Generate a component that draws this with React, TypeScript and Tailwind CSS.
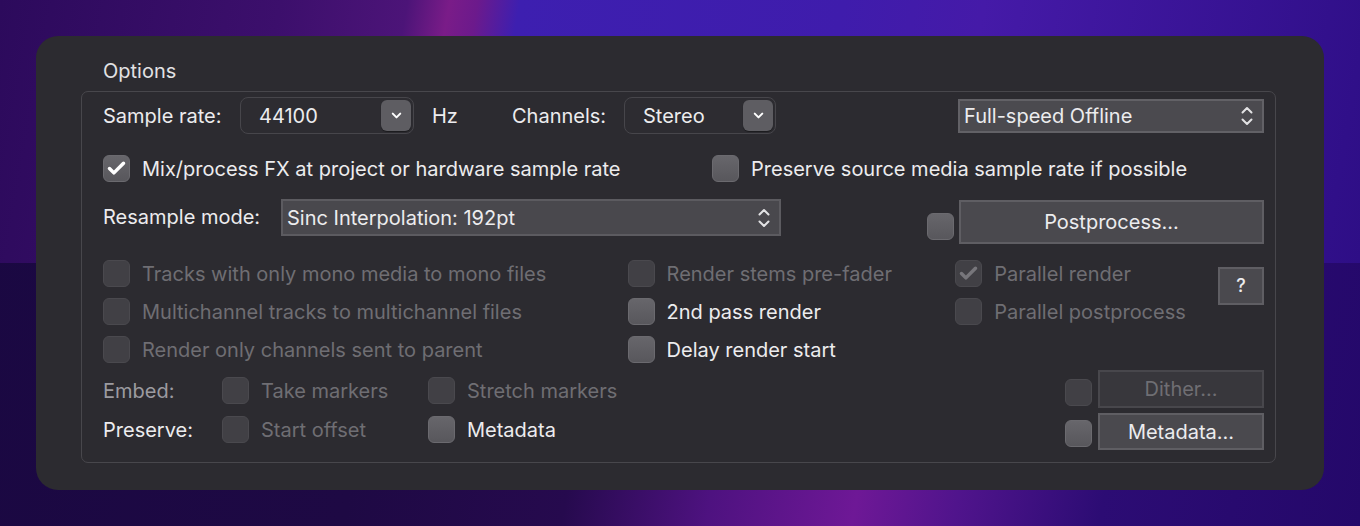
import React from 'react';
import { Check, ChevronDown } from 'lucide-react';

const font = { fontFamily: 'Inter, "Noto Sans", sans-serif' };

interface BoxProps {
  checked?: boolean;
  disabled?: boolean;
}

const Box: React.FC<BoxProps> = ({ checked, disabled }) => (
  <div
    className={`flex h-[27px] w-[27px] shrink-0 items-center justify-center rounded-[6px] border ${
      disabled
        ? 'border-[#4a494e] bg-[#414045]'
        : 'border-[#6b6a6f] bg-gradient-to-b from-[#67666b] to-[#58575c]'
    }`}
  >
    {checked && (
      <Check size={21} strokeWidth={4} className={disabled ? 'text-[#77767b]' : 'text-white'} />
    )}
  </div>
);

interface OptionProps extends BoxProps {
  label: string;
}

const Option: React.FC<OptionProps> = ({ label, checked, disabled }) => (
  <div className="flex h-[27px] items-center gap-[12px]">
    <Box checked={checked} disabled={disabled} />
    <span className={`whitespace-nowrap ${disabled ? 'text-[#6f6e73]' : 'text-[#ececee]'}`}>{label}</span>
  </div>
);

const UpDown = () => (
  <svg width="14" height="22" viewBox="0 0 14 22" fill="none" stroke="#e2e2e4" strokeWidth="2" strokeLinecap="round" strokeLinejoin="round">
    <path d="M2.5 7.5 7 3l4.5 4.5" />
    <path d="M2.5 14.5 7 19l4.5-4.5" />
  </svg>
);

const PopSelect: React.FC<{ value: string; width: string }> = ({ value, width }) => (
  <div className={`flex h-[37px] ${width} items-center justify-between rounded-[8px] border border-[#47464b] bg-[#2d2c31] pl-[18px] pr-[2px]`}>
    <span className="text-[#ececee]">{value}</span>
    <div className="flex h-[31px] w-[30px] items-center justify-center rounded-[6px] bg-[#5e5d62] shadow-[0_1px_1px_rgba(0,0,0,0.4)]">
      <ChevronDown size={15} strokeWidth={3.2} className="text-white" />
    </div>
  </div>
);

export default function App() {
  return (
    <div
      className="h-[526px] w-[1360px] overflow-hidden bg-[image:linear-gradient(100deg,#2c0a5c_0%,#3c0f6c_20%,#4c1478_29%,#7a1c88_32%,#6c1a8c_34%,#3d1fb0_37%,#3f1cac_60%,#451aa8_70%,#2e0e86_100%),linear-gradient(100deg,#1a0842_0%,#1e0944_30%,#260a4e_45%,#4e1280_55%,#6e1896_65%,#50148c_72%,#2c0c74_82%,#24086a_100%)] bg-[length:100%_263px,100%_100%] bg-no-repeat px-[36px] pt-[36px]"
      style={font}
    >
      <div className="h-[454px] rounded-[22px] bg-[#2c2b30] pl-[45px] pr-[48px] pt-[25px] text-[20px] leading-none">
        <div className="pl-[22px] text-[#e2e2e4]">Options</div>
        <div className="mt-[10px] h-[372px] rounded-[7px] border border-[#48474c] pl-[21px] pr-[11px] pt-[5px]">
          {/* row 1 */}
          <div className="flex h-[37px] items-center text-[#ececee]">
            <span className="w-[137px]">Sample rate:</span>
            <PopSelect value="44100" width="w-[174px]" />
            <span className="ml-[18px] w-[80px]">Hz</span>
            <span className="w-[112px]">Channels:</span>
            <PopSelect value="Stereo" width="w-[152px]" />
            <div className="ml-auto flex h-[34px] w-[306px] items-center justify-between border-2 border-[#626166] bg-[#4b4a4f] pl-[4px] pr-[8px]">
              <span>Full-speed Offline</span>
              <UpDown />
            </div>
          </div>

          {/* row 2 */}
          <div className="mt-[21px] flex">
            <div className="w-[609px]">
              <Option label="Mix/process FX at project or hardware sample rate" checked />
            </div>
            <Option label="Preserve source media sample rate if possible" />
          </div>

          {/* row 3 */}
          <div className="mt-[17px] flex h-[45px] items-start text-[#ececee]">
            <span className="flex h-[36px] w-[178px] items-center">Resample mode:</span>
            <div className="flex h-[37px] w-[500px] items-center justify-between border-2 border-[#5c5b60] bg-[#49484d] pl-[4px] pr-[8px]">
              <span>Sinc Interpolation: 192pt</span>
              <UpDown />
            </div>
            <div className="ml-auto flex items-center gap-[5px] pt-[1px]">
              <div className="mt-[9px]">
                <Box />
              </div>
              <div className="flex h-[44px] w-[305px] items-center justify-center border-2 border-[#5f5e63] bg-[#4a494e]">
                Postprocess...
              </div>
            </div>
          </div>

          {/* rows 4-6 */}
          <div className="mt-[16px] flex">
            <div className="flex w-[525px] flex-col gap-[11px]">
              <Option label="Tracks with only mono media to mono files" disabled />
              <Option label="Multichannel tracks to multichannel files" disabled />
              <Option label="Render only channels sent to parent" disabled />
            </div>
            <div className="flex w-[328px] flex-col gap-[11px]">
              <Option label="Render stems pre-fader" disabled />
              <Option label="2nd pass render" />
              <Option label="Delay render start" />
            </div>
            <div className="flex w-[263px] flex-col gap-[11px]">
              <Option label="Parallel render" checked disabled />
              <Option label="Parallel postprocess" disabled />
            </div>
            <div className="mt-[7px] flex h-[38px] w-[46px] items-center justify-center border-2 border-[#5f5e63] bg-[#4a494e] text-[18px] font-medium text-[#ececee]">
              ?
            </div>
          </div>

          {/* rows 7-8 */}
          <div className="mt-[7px] flex items-start">
            <div className="flex flex-col gap-[12px] pt-[7px]">
              <div className="flex h-[27px] items-center">
                <span className="w-[119px] text-[#9c9ba0]">Embed:</span>
                <div className="w-[206px]">
                  <Option label="Take markers" disabled />
                </div>
                <Option label="Stretch markers" disabled />
              </div>
              <div className="flex h-[27px] items-center">
                <span className="w-[119px] text-[#ececee]">Preserve:</span>
                <div className="w-[206px]">
                  <Option label="Start offset" disabled />
                </div>
                <Option label="Metadata" />
              </div>
            </div>
            <div className="ml-auto flex flex-col gap-[5px]">
              <div className="flex items-center gap-[6px]">
                <div className="mt-[6px]">
                  <Box disabled />
                </div>
                <div className="flex h-[38px] w-[166px] items-center justify-center border-2 border-[#48474c] bg-[#38373c] text-[#6f6e73]">
                  Dither...
                </div>
              </div>
              <div className="flex items-center gap-[6px]">
                <div className="mt-[4px]">
                  <Box />
                </div>
                <div className="flex h-[37px] w-[166px] items-center justify-center border-2 border-[#5f5e63] bg-[#4a494e] text-[#ececee]">
                  Metadata...
                </div>
              </div>
            </div>
          </div>
        </div>
      </div>
    </div>
  );
}
